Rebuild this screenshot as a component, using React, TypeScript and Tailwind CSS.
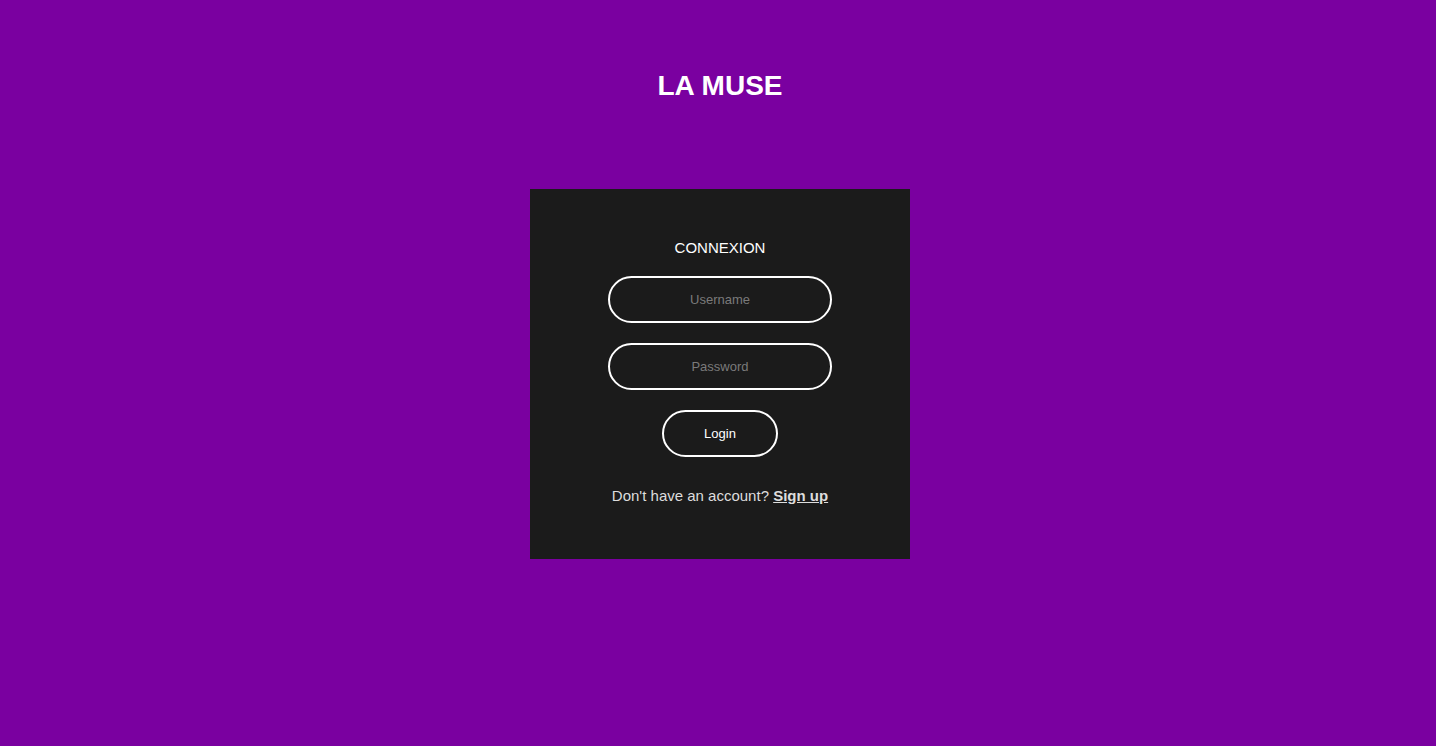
export default function App() {
    return (
        <div className="min-h-screen h-[746px] bg-[#7a00a0] flex flex-col items-center pl-[4px] font-['Liberation_Sans',Arial,sans-serif]">
            <h1 className="mt-[70px] text-[28px] leading-[32px] font-bold text-white">
                LA MUSE
            </h1>
            <div className="mt-[87px] w-[380px] h-[370px] bg-[#1b1b1b] flex flex-col items-center">
                <div className="mt-[50px] text-[15px] leading-[17px] text-white">
                    CONNEXION
                </div>
                <input
                    type="text"
                    placeholder="Username"
                    className="mt-[20px] w-[224px] h-[47px] rounded-full border-2 border-white bg-transparent text-center text-[13px] text-white placeholder:text-[#7a7a7a] outline-none"
                />
                <input
                    type="password"
                    placeholder="Password"
                    className="mt-[20px] w-[224px] h-[47px] rounded-full border-2 border-white bg-transparent text-center text-[13px] text-white placeholder:text-[#7a7a7a] outline-none"
                />
                <button className="mt-[20px] w-[116px] h-[47px] rounded-full border-2 border-white bg-transparent text-[13px] text-white">
                    Login
                </button>
                <div className="mt-[30px] text-[15px] leading-[17px] text-[#dddddd]">
                    Don't have an account?{" "}
                    <a href="#" className="font-bold underline">Sign up</a>
                </div>
            </div>
        </div>
    );
}
